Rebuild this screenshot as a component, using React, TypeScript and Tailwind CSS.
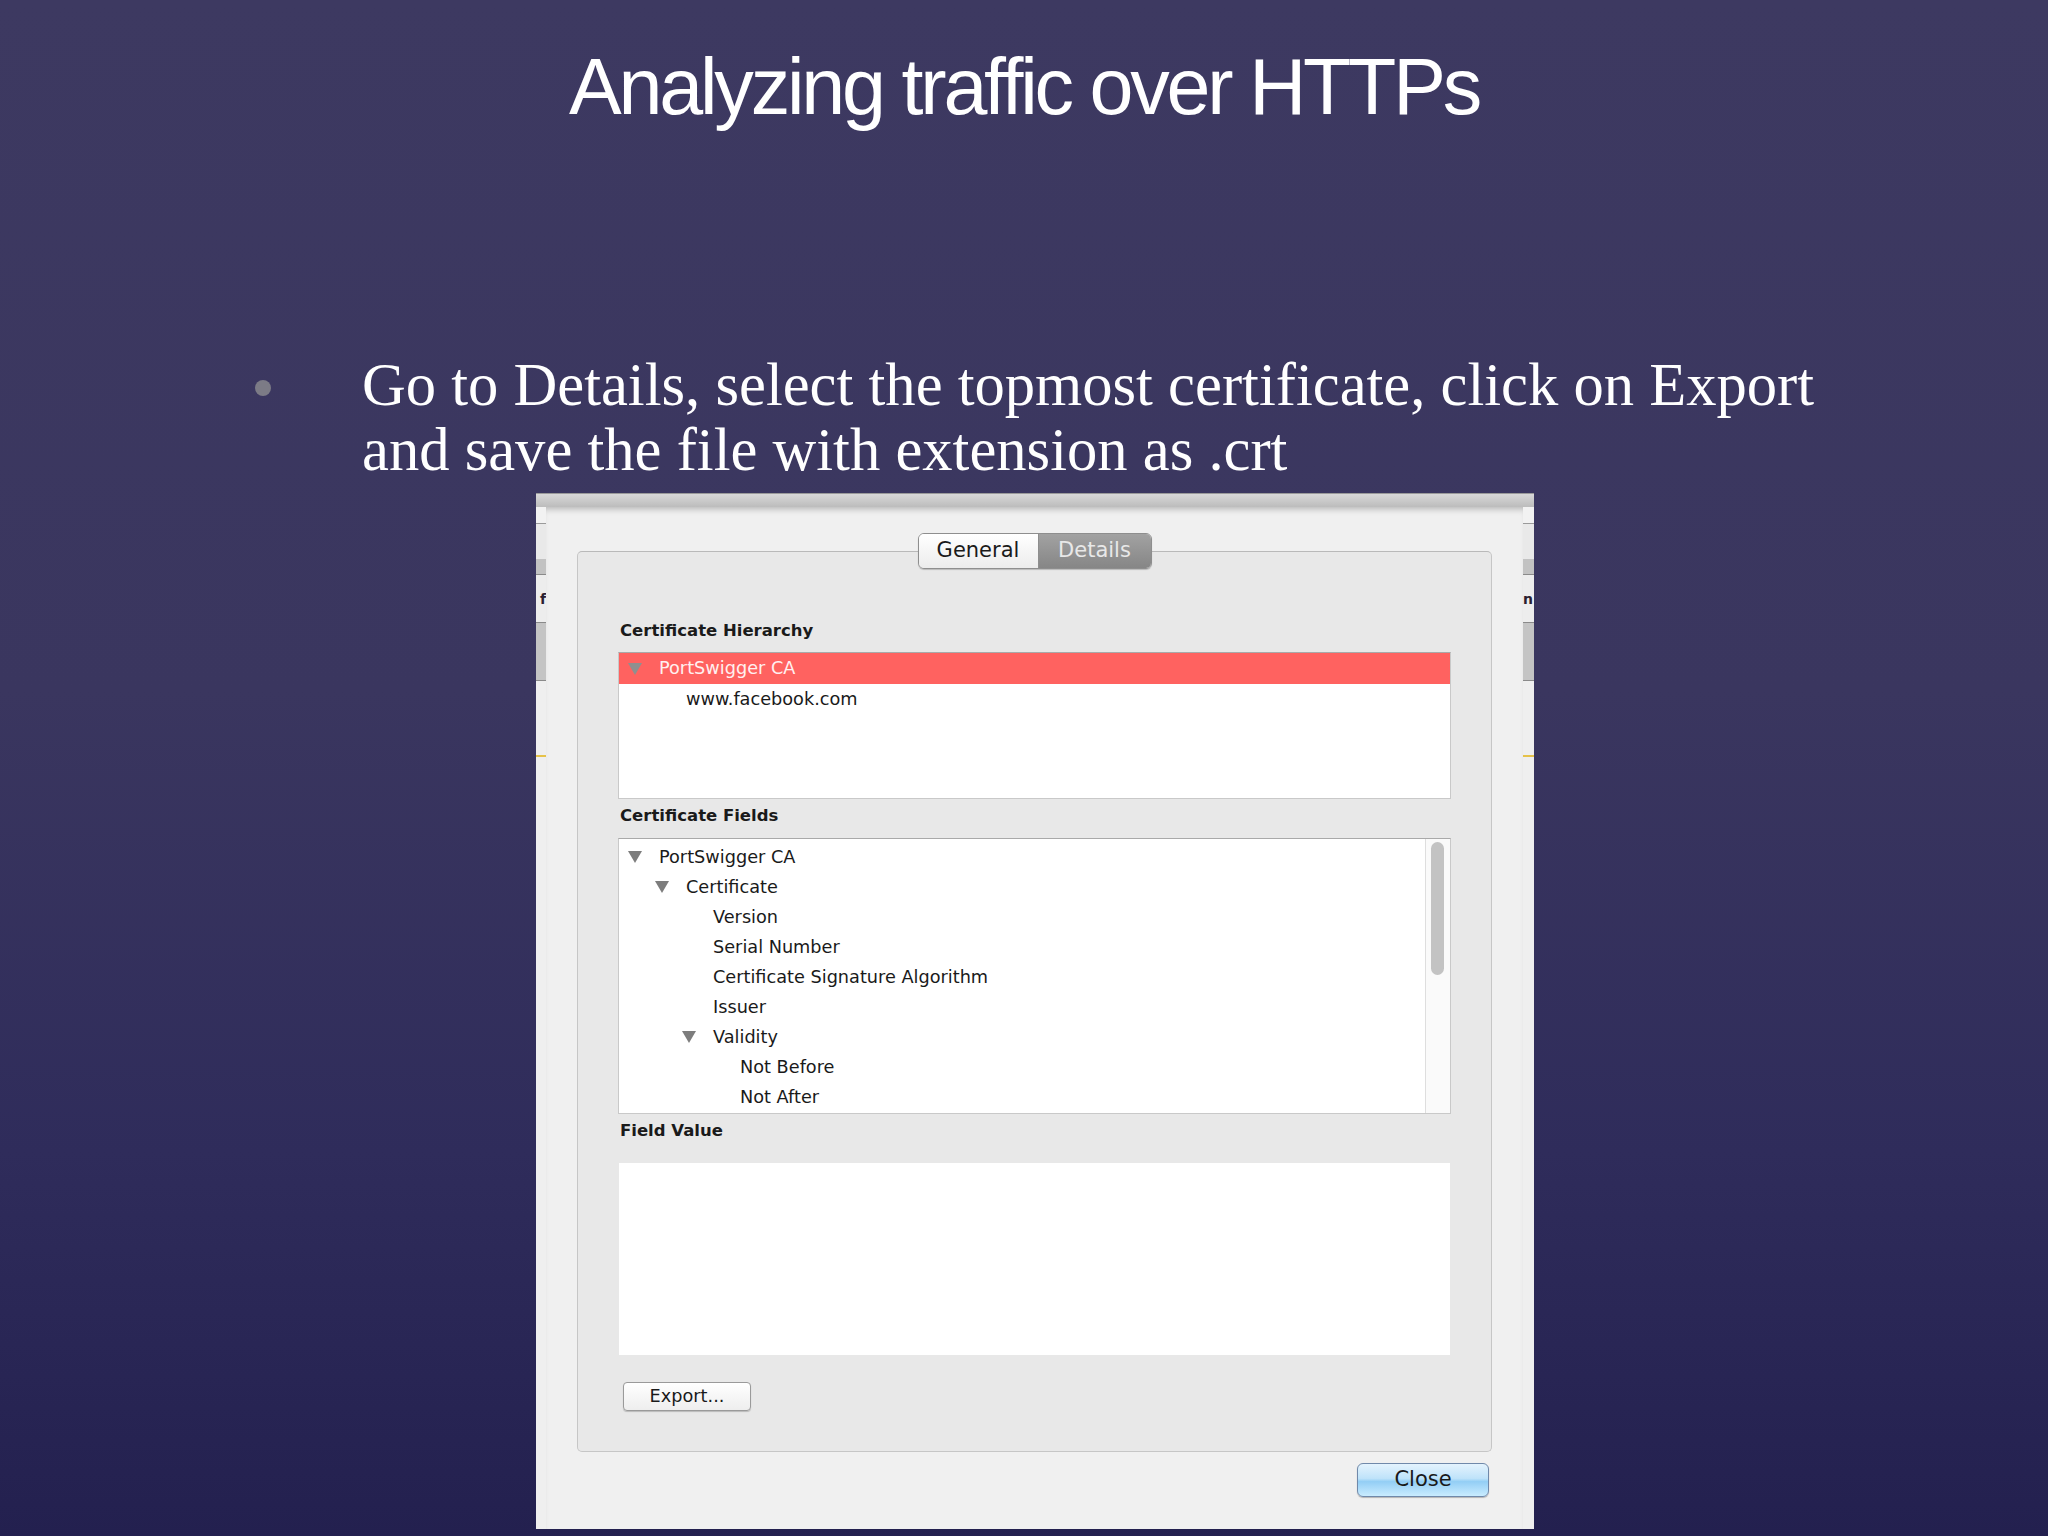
import React from 'react';

// Tree rows for the "Certificate Fields" box
const fieldRows = [
  { label: 'PortSwigger CA', level: 0, open: true },
  { label: 'Certificate', level: 1, open: true },
  { label: 'Version', level: 2, open: false },
  { label: 'Serial Number', level: 2, open: false },
  { label: 'Certificate Signature Algorithm', level: 2, open: false },
  { label: 'Issuer', level: 2, open: false },
  { label: 'Validity', level: 2, open: true },
  { label: 'Not Before', level: 3, open: false },
  { label: 'Not After', level: 3, open: false },
];

const indent: Record<number, string> = {
  0: 'pl-[9px]',
  1: 'pl-[36px]',
  2: 'pl-[63px]',
  3: 'pl-[90px]',
};

function Disclosure() {
  return (
    <svg width="14" height="12" viewBox="0 0 14 12" className="block">
      <polygon points="0,0 14,0 7,12" fill="currentColor" />
    </svg>
  );
}

function TreeRow({
  label,
  level,
  open,
  className = 'h-[30px]',
}: {
  label: string;
  level: number;
  open: boolean;
  className?: string;
}) {
  // expanded rows draw their triangle one slot to the left of the text
  const pad = open ? indent[Math.max(level - 1, 0)] : indent[level];
  const pad2 = open && level > 0 ? '' : '';
  return (
    <div className={`flex items-center ${level === 0 || !open ? indent[level] : pad} ${pad2} ${className}`}>
      {level === 0 || !open ? (
        <span className="flex w-[31px] items-center">{open && <Disclosure />}</span>
      ) : (
        <span className="flex w-[58px] items-center pl-[27px]">
          <Disclosure />
        </span>
      )}
      <span className="whitespace-nowrap">{label}</span>
    </div>
  );
}

// Behind-the-sheet window edge (the strips visible on the sides)
function WindowStrip({ width, text, align }: { width: string; text: string; align: string }) {
  return (
    <div className={`flex flex-col ${width}`}>
      <div className="h-[16px] bg-[#f2f2f2]" />
      <div className="h-[1px] bg-[#9a9a9a]" />
      <div className="h-[35px] bg-[#e9e9e9]" />
      <div className="h-[15px] bg-[#c2c2c2]" />
      <div className="h-[1px] bg-[#8a8a8a]" />
      <div className={`flex h-[47px] items-center bg-[#ededed] ${align}`}>
        <span className="text-[14px] font-bold leading-none text-[#2a2030]">{text}</span>
      </div>
      <div className="h-[1px] bg-[#8a8a8a]" />
      <div className="h-[57px] bg-[#c4c4c4]" />
      <div className="h-[1px] bg-[#8a8a8a]" />
      <div className="h-[74px] bg-[#efefef]" />
      <div className="h-[2px] bg-[#e6c24a]" />
      <div className="flex-1 bg-[#efefef]" />
    </div>
  );
}

export default function App() {
  return (
    <div className="relative flex h-[1536px] w-[2048px] flex-col overflow-hidden bg-[linear-gradient(180deg,#3d3961_0%,#3a365f_45%,#2f2c5b_75%,#23204f_100%)]">
      {/* Slide title */}
      <h1 className="mt-[47px] h-[80px] text-center font-['Liberation_Sans',Arial,sans-serif] text-[79px] font-normal leading-[80px] tracking-[-3.2px] text-white">
        Analyzing traffic over HTTPs
      </h1>

      {/* Bullet */}
      <div className="mt-[225px] flex pl-[254px]">
        <div className="w-[108px]">
          <span className="ml-[1px] mt-[28px] block h-[16px] w-[16px] rounded-full bg-[#7c7b86]" />
        </div>
        <p className="font-['Liberation_Serif','Times_New_Roman',serif] text-[60.6px] leading-[65px] text-white">
          Go to Details, select the topmost certificate, click on Export
          <br />
          and save the file with extension as .crt
        </p>
      </div>

      {/* Certificate window screenshot */}
      <div className="ml-[536px] mt-[11px] flex w-[998px] flex-col font-['DejaVu_Sans',Verdana,sans-serif] text-[#1a1a1a]">
        <div className="h-[14px] border-t border-[#9a9a9a] bg-[linear-gradient(180deg,#d8d8d8,#bcbcbc)]" />
        <div className="flex h-[1022px]">
          <WindowStrip width="w-[10px]" text="f" align="justify-end" />

          {/* Sheet */}
          <div className="flex w-[977px] flex-col bg-[#f0f0f0] shadow-[inset_0_6px_6px_-4px_rgba(0,0,0,0.25)]">
            {/* Tab panel */}
            <div className="relative mx-[31px] mt-[44px] h-[901px] rounded-[5px] border border-[#c6c6c6] border-t-[#b9b9b9] bg-[#e8e8e8] px-[40px] pt-[69px]">
              <div className="absolute left-1/2 top-[-19px] flex h-[36px] -translate-x-1/2 overflow-hidden rounded-[6px] border border-[#8e8e8e] text-[21px] shadow-[0_1px_1px_rgba(0,0,0,0.2)]">
                <div className="flex w-[120px] items-center justify-center border-r border-[#8e8e8e] bg-[linear-gradient(180deg,#ffffff,#ececec)] text-[#1a1a1a]">
                  General
                </div>
                <div className="flex w-[112px] items-center justify-center bg-[linear-gradient(180deg,#a2a2a2,#868686)] text-[#e8e8e8]">
                  Details
                </div>
              </div>

              <div className="h-[20px] pl-[2px] text-[16.5px] font-bold leading-[20px]">Certificate Hierarchy</div>
              <div className="mt-[11px] h-[147px] border border-[#c9c9c9] border-t-[#a9a9a9] bg-white text-[17.7px]">
                <TreeRow
                  label="PortSwigger CA"
                  level={0}
                  open
                  className="h-[31px] bg-[#ff6260] text-[#fff0f0] [&_svg]:text-[#8f8f8f]"
                />
                <TreeRow label="www.facebook.com" level={1} open={false} className="h-[31px]" />
              </div>

              <div className="mt-[7px] h-[20px] pl-[2px] text-[16.5px] font-bold leading-[20px]">Certificate Fields</div>
              <div className="mt-[12px] flex h-[276px] border border-[#c9c9c9] border-t-[#a9a9a9] bg-white text-[17.7px]">
                <div className="flex-1 overflow-hidden pt-[3px] text-[#1a1a1a] [&_svg]:text-[#7d7d7d]">
                  {fieldRows.map(row => (
                    <TreeRow key={row.label} label={row.label} level={row.level} open={row.open} />
                  ))}
                </div>
                <div className="w-[25px] border-l border-[#dedede] bg-[#fafafa]">
                  <div className="ml-[5px] mt-[3px] h-[133px] w-[13px] rounded-full bg-[#c3c3c3]" />
                </div>
              </div>

              <div className="mt-[7px] h-[20px] pl-[2px] text-[16.5px] font-bold leading-[20px]">Field Value</div>
              <div className="mx-[1px] mt-[22px] h-[192px] bg-white" />

              <button className="ml-[5px] mt-[27px] flex h-[29px] w-[128px] items-center justify-center rounded-[4px] border border-[#9a9a9a] bg-[linear-gradient(180deg,#ffffff,#eeeeee)] text-[17.7px] text-[#1a1a1a] shadow-[0_1px_1px_rgba(0,0,0,0.2)]">
                Export...
              </button>
            </div>

            {/* Close */}
            <div className="mt-[11px] flex justify-end pr-[34px]">
              <button className="flex h-[34px] w-[132px] items-center justify-center rounded-[6px] border border-[#7089aa] bg-[linear-gradient(180deg,#e4f3fd_0%,#bfe3fa_45%,#93cef5_55%,#c9ecff_100%)] text-[21px] text-[#1a1a1a] shadow-[0_1px_1px_rgba(0,0,0,0.25)]">
                Close
              </button>
            </div>
          </div>

          <WindowStrip width="w-[11px]" text="n" align="justify-start" />
        </div>
      </div>
    </div>
  );
}
